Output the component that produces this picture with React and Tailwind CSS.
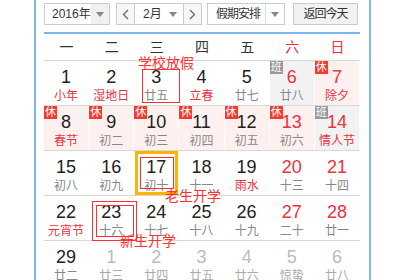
const font = { fontFamily: '"Liberation Sans", Arial, "Noto Sans CJK SC", sans-serif' };

const rows = [
  [
    { d: 1, l: "小年", lr: true },
    { d: 2, l: "湿地日", lr: true },
    { d: 3, l: "廿五" },
    { d: 4, l: "立春", lr: true },
    { d: 5, l: "廿七" },
    { d: 6, l: "廿八", tag: "班" },
    { d: 7, l: "除夕", lr: true, tag: "休" },
  ],
  [
    { d: 8, l: "春节", lr: true, tag: "休" },
    { d: 9, l: "初二", tag: "休" },
    { d: 10, l: "初三", tag: "休" },
    { d: 11, l: "初四", tag: "休" },
    { d: 12, l: "初五", tag: "休" },
    { d: 13, l: "初六", tag: "休" },
    { d: 14, l: "情人节", lr: true, tag: "班" },
  ],
  [
    { d: 15, l: "初八" },
    { d: 16, l: "初九" },
    { d: 17, l: "初十", today: true },
    { d: 18, l: "十一" },
    { d: 19, l: "雨水", lr: true },
    { d: 20, l: "十三" },
    { d: 21, l: "十四" },
  ],
  [
    { d: 22, l: "元宵节", lr: true },
    { d: 23, l: "十六" },
    { d: 24, l: "十七" },
    { d: 25, l: "十八" },
    { d: 26, l: "十九" },
    { d: 27, l: "二十" },
    { d: 28, l: "廿一" },
  ],
  [
    { d: 29, l: "廿二" },
    { d: 1, l: "廿三", other: true },
    { d: 2, l: "廿四", other: true },
    { d: 3, l: "廿五", other: true },
    { d: 4, l: "廿六", other: true },
    { d: 5, l: "惊蛰", other: true },
    { d: 6, l: "廿八", other: true },
  ],
];

const weekdays = ["一", "二", "三", "四", "五", "六", "日"];

function Caret() {
  return (
    <svg width="8" height="5" viewBox="0 0 8 5">
      <path d="M0 0 L8 0 L4 5 Z" fill="#888" />
    </svg>
  );
}

function Chevron({ dir }) {
  return (
    <svg width="7" height="11" viewBox="0 0 7 11">
      <path
        d={dir === "left" ? "M6 1 L1.5 5.5 L6 10" : "M1 1 L5.5 5.5 L1 10"}
        stroke="#666"
        strokeWidth="1.3"
        fill="none"
      />
    </svg>
  );
}

function Cell({ day, col }) {
  let bg = "bg-white";
  if (day.tag === "休") bg = "bg-[#fff0f0]";
  if (day.tag === "班") bg = "bg-[#f2f2f2]";

  let numColor = "text-[#222]";
  if (col >= 5) numColor = "text-[#f0303c]";
  if (day.other) numColor = "text-[#bbb]";

  let lunarColor = day.lr ? "text-[#e8333f]" : "text-[#888]";
  if (day.other) lunarColor = "text-[#aaa]";

  return (
    <div className={`relative h-[44px] border-r border-white ${bg} flex flex-col items-center`}>
      {day.tag && (
        <div
          className={`absolute left-0 top-0 w-[13px] h-[13px] flex items-center justify-center text-[11px] leading-none text-white ${
            day.tag === "休" ? "bg-[#f5392f]" : "bg-[#999]"
          }`}
        >
          {day.tag}
        </div>
      )}
      {day.today && (
        <div className="absolute left-px top-0 right-0 bottom-0 border-[3px] border-[#ffb400]" />
      )}
      <div className={`mt-[5px] text-[18px] leading-[22px] ${numColor}`}>{day.d}</div>
      <div className={`text-[12px] leading-[16px] whitespace-nowrap ${lunarColor}`}>{day.l}</div>
    </div>
  );
}

export default function App() {
  return (
    <div className="relative w-[400px] h-[280px] overflow-hidden bg-white" style={font}>
      <div className="ml-[34px] w-[337px] h-[280px] border-x-2 border-[#7db4ef] pl-[8px] pr-[9px]">
        {/* toolbar */}
        <div className="pt-[3px] flex items-center text-[12px] text-[#333] whitespace-nowrap">
          <div className="w-[66px] h-[22px] flex border border-[#ccc]">
            <div className="flex-1 flex items-center pl-[7px] bg-white">2016年</div>
            <div className="w-[20px] flex items-center justify-center bg-[#f0f0f0]">
              <Caret />
            </div>
          </div>
          <div className="ml-[6px] w-[86px] h-[22px] flex border border-[#ccc]">
            <div className="w-[18px] flex items-center justify-center bg-[#f6f6f6] border-r border-[#ccc]">
              <Chevron dir="left" />
            </div>
            <div className="flex-1 flex items-center justify-between pl-[8px] pr-[6px] bg-white">
              <span>2月</span>
              <Caret />
            </div>
            <div className="w-[18px] flex items-center justify-center bg-[#f6f6f6] border-l border-[#ccc]">
              <Chevron dir="right" />
            </div>
          </div>
          <div className="ml-[5px] w-[78px] h-[22px] flex border border-[#ccc]">
            <div className="flex-1 flex items-center pl-[8px] bg-white tracking-[-1px]">假期安排</div>
            <div className="w-[19px] flex items-center justify-center bg-white border-l border-[#ddd]">
              <Caret />
            </div>
          </div>
          <div className="ml-[8px] w-[65px] h-[22px] flex items-center justify-center border border-[#ccc] bg-[#f2f2f2] tracking-[-1px]">
            返回今天
          </div>
        </div>

        <div className="mt-[7px] h-[2px] bg-[#7db4ef]" />

        {/* weekday header */}
        <div className="grid grid-cols-7 h-[27px] border-b border-[#d8d8d8] text-[14px]">
          {weekdays.map((w, i) => (
            <div
              key={w}
              className={`flex items-center justify-center ${i >= 5 ? "text-[#f0303c]" : "text-[#333]"}`}
            >
              {w}
            </div>
          ))}
        </div>

        {/* days */}
        {rows.map((row, r) => (
          <div key={r} className="grid grid-cols-7 border-b border-[#d8d8d8]">
            {row.map((day, c) => (
              <Cell key={c} day={day} col={c} />
            ))}
          </div>
        ))}
      </div>

      {/* annotations */}
      <div className="absolute left-[138px] top-[55px] text-[14px] leading-[16px] text-[#ff3030] whitespace-nowrap">学校放假</div>
      <div className="absolute left-[142px] top-[69px] w-[38px] h-[34px] border border-[#ff3030]" />
      <div className="absolute left-[140px] top-[157px] w-[34px] h-[32px] border border-[#ff3030]" />
      <div className="absolute left-[165px] top-[188px] text-[14px] leading-[16px] text-[#ff3030] whitespace-nowrap">老生开学</div>
      <div className="absolute left-[92px] top-[201px] w-[45px] h-[40px] border border-[#ff3030]" />
      <div className="absolute left-[96px] top-[205px] w-[38px] h-[32px] border border-[#ff3030]" />
      <div className="absolute left-[120px] top-[233px] text-[14px] leading-[16px] text-[#ff3030] whitespace-nowrap">新生开学</div>
    </div>
  );
}
